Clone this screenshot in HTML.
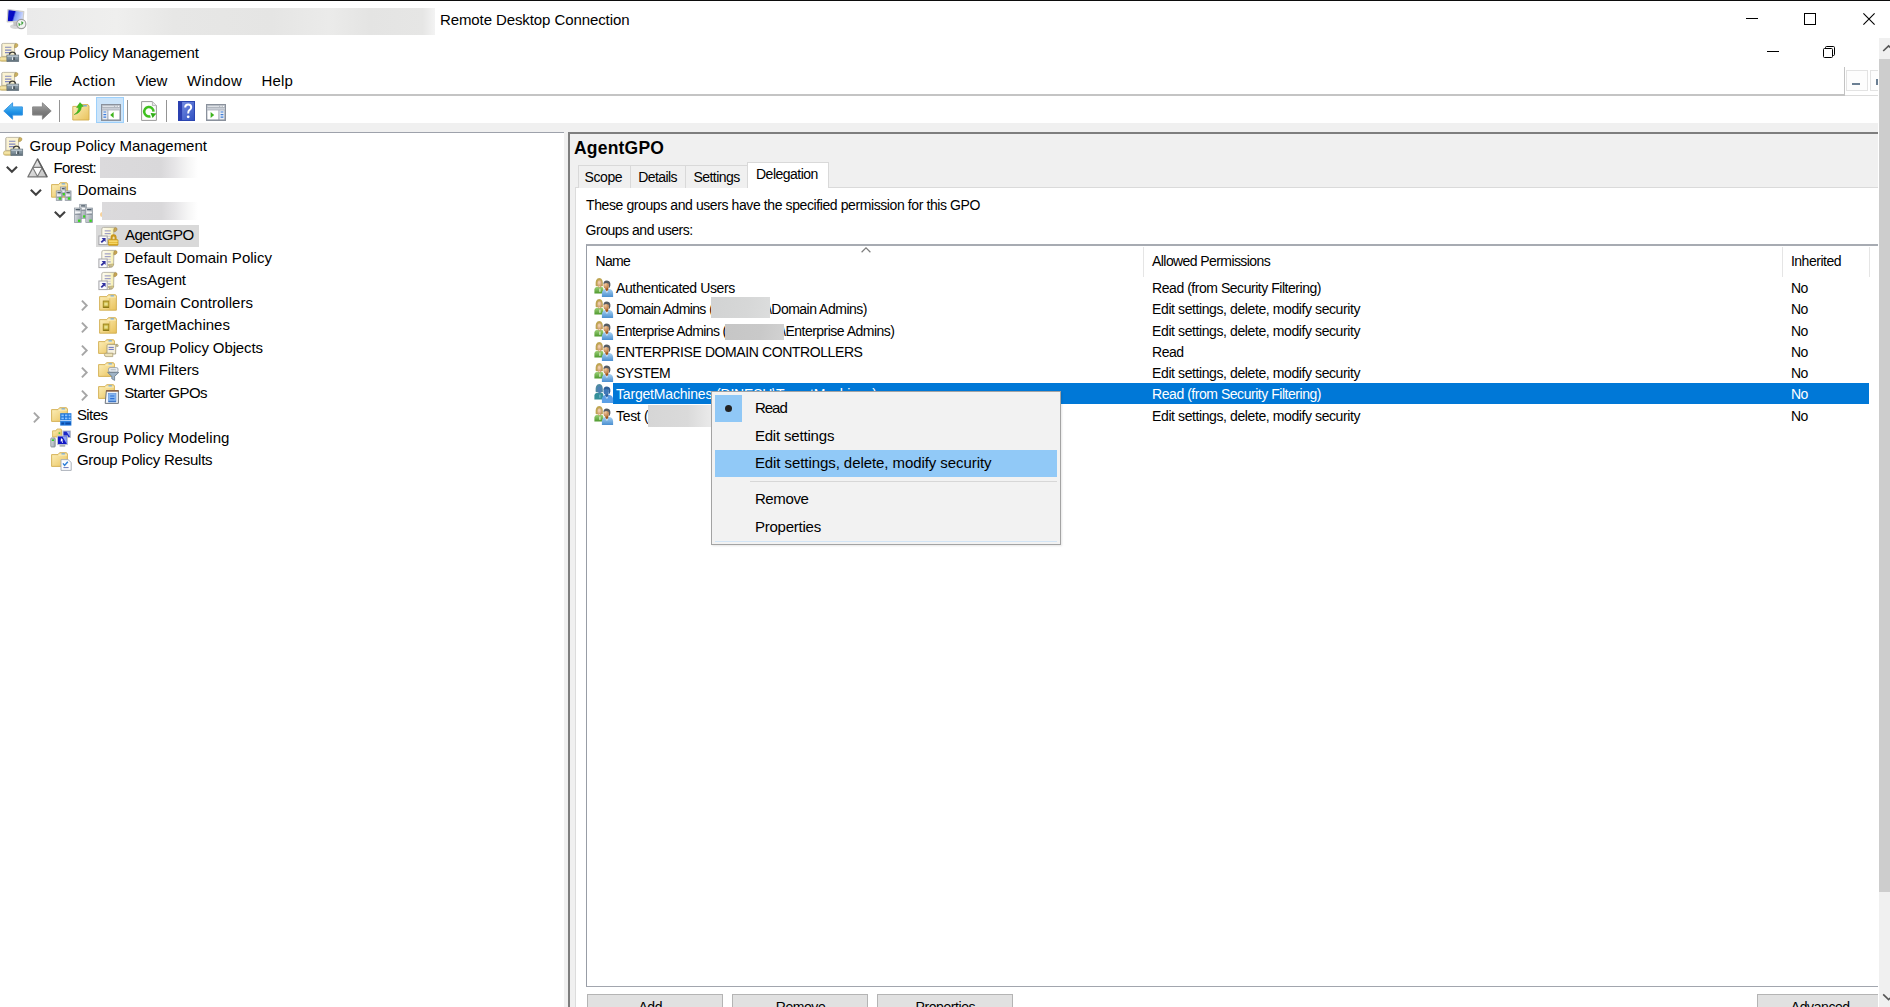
<!DOCTYPE html>
<html lang="en">
<head>
<meta charset="utf-8">
<title>Remote Desktop Connection - Group Policy Management</title>
<style>
*{box-sizing:border-box;margin:0;padding:0}
html,body{width:1890px;height:1007px;overflow:hidden;background:#fff}
body{position:relative;font-family:"Liberation Sans",sans-serif;color:#000;font-size:15px}
.abs{position:absolute}
.t{position:absolute;white-space:pre;line-height:1;color:#000}
svg{overflow:visible}
</style>
</head>
<body>
<svg class="abs" width="0" height="0" style="left:0;top:0"><defs>
<linearGradient id="gFold" x1="0" y1="0" x2="0" y2="1"><stop offset="0" stop-color="#fbe9a6"/><stop offset="1" stop-color="#eec962"/></linearGradient>
<linearGradient id="gFold2" x1="0" y1="0" x2="1" y2="1"><stop offset="0" stop-color="#fdf0bd"/><stop offset="1" stop-color="#e9c25a"/></linearGradient>
<linearGradient id="gBlue" x1="0" y1="0" x2="0" y2="1"><stop offset="0" stop-color="#6fc6f7"/><stop offset="0.55" stop-color="#1f93e6"/><stop offset="1" stop-color="#0b6fd0"/></linearGradient>
<linearGradient id="gGray" x1="0" y1="0" x2="0" y2="1"><stop offset="0" stop-color="#a9a9a9"/><stop offset="0.55" stop-color="#7d7d7d"/><stop offset="1" stop-color="#6a6a6a"/></linearGradient>
<linearGradient id="gSrv" x1="0" y1="0" x2="1" y2="0.4"><stop offset="0" stop-color="#e3e6ea"/><stop offset="1" stop-color="#a3abb4"/></linearGradient>
<linearGradient id="gHelp" x1="0" y1="0" x2="1" y2="1"><stop offset="0" stop-color="#7c93e6"/><stop offset="1" stop-color="#2f4fc0"/></linearGradient>
<linearGradient id="gTri" x1="0" y1="0" x2="1" y2="1"><stop offset="0" stop-color="#f0f0f0"/><stop offset="1" stop-color="#c2c2c2"/></linearGradient>
<linearGradient id="gScr" x1="0" y1="0" x2="1" y2="0.22"><stop offset="0" stop-color="#2a3ad6"/><stop offset="0.12" stop-color="#0a10c6"/><stop offset="0.46" stop-color="#0508c2"/><stop offset="0.56" stop-color="#7d98f1"/><stop offset="1" stop-color="#cdd9fd"/></linearGradient>
<linearGradient id="gPaper" x1="0" y1="0" x2="1" y2="0"><stop offset="0" stop-color="#fdfbf0"/><stop offset="0.55" stop-color="#fbf7d8"/><stop offset="1" stop-color="#f3ea9a"/></linearGradient>
<linearGradient id="gLock" x1="0" y1="0" x2="0" y2="1"><stop offset="0" stop-color="#f7d56a"/><stop offset="1" stop-color="#d9a514"/></linearGradient>
<linearGradient id="gWin" x1="0" y1="0" x2="0" y2="1"><stop offset="0" stop-color="#b9bec6"/><stop offset="1" stop-color="#8f97a3"/></linearGradient>
<radialGradient id="gFace" cx="0.4" cy="0.35" r="0.7"><stop offset="0" stop-color="#f6d9b8"/><stop offset="1" stop-color="#c48f62"/></radialGradient>
<radialGradient id="gFace2" cx="0.35" cy="0.35" r="0.8"><stop offset="0" stop-color="#f0c9a0"/><stop offset="1" stop-color="#b06a30"/></radialGradient>
<linearGradient id="gShG" x1="0" y1="0" x2="0" y2="1"><stop offset="0" stop-color="#9fd27a"/><stop offset="1" stop-color="#4f9a2f"/></linearGradient>
<linearGradient id="gShB" x1="0" y1="0" x2="0" y2="1"><stop offset="0" stop-color="#a9d2f3"/><stop offset="1" stop-color="#4a8fd0"/></linearGradient>
</defs></svg>
<div class="abs" style="left:0px;top:0px;width:1890px;height:1px;background:#0c0c0c;"></div>
<svg class="abs" style="left:0px;top:0px" width="30" height="32" viewBox="0 0 30 32"><ellipse cx="15.6" cy="26.4" rx="5.6" ry="2.5" fill="#d6d6d6"/><path d="M13 21 L17.6 21 L17.2 26 L13.6 26 Z" fill="#c2c2c2"/><path d="M8 9.5 L23.8 11.6 L22.9 21.2 L7.2 21.8 Z" fill="url(#gScr)" stroke="#cdcdcb" stroke-width="1.2" stroke-linejoin="round"/><circle cx="21.3" cy="24" r="4.6" fill="#f3f3f3" stroke="#9c9c9c" stroke-width="1.1"/><path d="M18.4 22.6 L20.8 24.6 L18.8 26.6 Z M21.4 21 L23.6 22.8 L21.4 25.4 Z" fill="#3ea23c"/></svg>
<div class="abs" style="left:27px;top:8px;width:408px;height:26.8px;background:linear-gradient(90deg,#eaeaea 0%,#efefee 22%,#e7e7e6 36%,#e5e5e4 60%,#ebebea 74%,#e4e4e3 84%,#e6e6e5 97%,#f3f3f3 100%);"></div>
<div class="t" style="left:439.9px;top:12.1px;font-size:15px;letter-spacing:-0.089px;">Remote Desktop Connection</div>
<svg class="abs" style="left:1746px;top:18px" width="12" height="1" viewBox="0 0 12 1"><rect x="0" y="0" width="12" height="1" fill="#000"/></svg>
<svg class="abs" style="left:1804px;top:13px" width="12" height="12" viewBox="0 0 12 12"><rect x="0.5" y="0.5" width="11" height="11" fill="none" stroke="#000" stroke-width="1"/></svg>
<svg class="abs" style="left:1863px;top:13px" width="12" height="12" viewBox="0 0 12 12"><path d="M0.4 0.4 L11.6 11.6 M11.6 0.4 L0.4 11.6" stroke="#000" stroke-width="1.1"/></svg>
<svg class="abs" style="left:-1px;top:43.1px" width="20" height="19" viewBox="0 0 20 19">
<path d="M2.6 1.6 Q2.6 0.4 4.4 0.4 L17 0.4 Q15.6 0.8 15.6 2.6 L15.6 13.4 L2.6 13.4 Z" fill="#fbf3d2" stroke="#b9b3a0" stroke-width="0.9"/>
<path d="M2.9 1.2 L2.9 13.4" stroke="#c9c6bd" stroke-width="1.2"/>
<path d="M15.6 2.8 Q15.6 0.5 17.6 0.5 Q19.4 0.9 18.8 3 Q18.2 4.6 15.6 4.8 Z" fill="#cdb260" stroke="#a8904a" stroke-width="0.6"/>
<path d="M6 4.3 H12.4 M6 7.1 H12.4 M6 9.6 H12.4" stroke="#8086bf" stroke-width="1.1"/>
<path d="M0.5 16 Q0.5 13.9 2.6 13.9 L9 13.9 L9 18.3 L2.4 18.3 Q0.5 18.3 0.5 16 Z" fill="#f4e4a4" stroke="#b9a566" stroke-width="0.7"/>
<path d="M0.8 17.4 H8.6" stroke="#d8c277" stroke-width="1"/>
<path d="M10.4 11.8 Q10.6 9.2 13.4 9.2 Q16.2 9.2 16.6 11.8" fill="none" stroke="#3f3f38" stroke-width="1.3"/>
<rect x="7.9" y="12.1" width="11.8" height="6.4" fill="#7f909b" stroke="#5d6b75" stroke-width="0.7"/>
<rect x="8.3" y="12.4" width="11" height="1.7" fill="#b3c0c9"/>
<rect x="8.3" y="16.6" width="11" height="1.5" fill="#667680"/>
<rect x="13.1" y="14.3" width="1.3" height="2.7" fill="#eef2f5"/><rect x="14.4" y="14.3" width="1.2" height="2.7" fill="#2e353b"/>
</svg>
<div class="t" style="left:23.8px;top:44.9px;font-size:15px;letter-spacing:-0.115px;">Group Policy Management</div>
<svg class="abs" style="left:1767px;top:51px" width="12" height="1" viewBox="0 0 12 1"><rect x="0" y="0" width="12" height="1" fill="#000"/></svg>
<svg class="abs" style="left:1823px;top:46px" width="12" height="12" viewBox="0 0 12 12"><path d="M2.5 2.5 L2.5 1.6 Q2.5 0.5 3.6 0.5 L10.4 0.5 Q11.5 0.5 11.5 1.6 L11.5 8.4 Q11.5 9.5 10.4 9.5 L9.5 9.5" fill="none" stroke="#000" stroke-width="1"/><rect x="0.5" y="2.5" width="9" height="9" rx="1" fill="none" stroke="#000" stroke-width="1"/></svg>
<svg class="abs" style="left:-1px;top:72.3px" width="20" height="19" viewBox="0 0 20 19">
<path d="M2.6 1.6 Q2.6 0.4 4.4 0.4 L17 0.4 Q15.6 0.8 15.6 2.6 L15.6 13.4 L2.6 13.4 Z" fill="#fbf3d2" stroke="#b9b3a0" stroke-width="0.9"/>
<path d="M2.9 1.2 L2.9 13.4" stroke="#c9c6bd" stroke-width="1.2"/>
<path d="M15.6 2.8 Q15.6 0.5 17.6 0.5 Q19.4 0.9 18.8 3 Q18.2 4.6 15.6 4.8 Z" fill="#cdb260" stroke="#a8904a" stroke-width="0.6"/>
<path d="M6 4.3 H12.4 M6 7.1 H12.4 M6 9.6 H12.4" stroke="#8086bf" stroke-width="1.1"/>
<path d="M0.5 16 Q0.5 13.9 2.6 13.9 L9 13.9 L9 18.3 L2.4 18.3 Q0.5 18.3 0.5 16 Z" fill="#f4e4a4" stroke="#b9a566" stroke-width="0.7"/>
<path d="M0.8 17.4 H8.6" stroke="#d8c277" stroke-width="1"/>
<path d="M10.4 11.8 Q10.6 9.2 13.4 9.2 Q16.2 9.2 16.6 11.8" fill="none" stroke="#3f3f38" stroke-width="1.3"/>
<rect x="7.9" y="12.1" width="11.8" height="6.4" fill="#7f909b" stroke="#5d6b75" stroke-width="0.7"/>
<rect x="8.3" y="12.4" width="11" height="1.7" fill="#b3c0c9"/>
<rect x="8.3" y="16.6" width="11" height="1.5" fill="#667680"/>
<rect x="13.1" y="14.3" width="1.3" height="2.7" fill="#eef2f5"/><rect x="14.4" y="14.3" width="1.2" height="2.7" fill="#2e353b"/>
</svg>
<div class="t" style="left:29.1px;top:72.6px;font-size:15px;letter-spacing:-0.330px;">File</div>
<div class="t" style="left:72.1px;top:72.6px;font-size:15px;letter-spacing:0.310px;">Action</div>
<div class="t" style="left:135.6px;top:72.6px;font-size:15px;letter-spacing:-0.198px;">View</div>
<div class="t" style="left:187.0px;top:72.6px;font-size:15px;letter-spacing:0.283px;">Window</div>
<div class="t" style="left:261.6px;top:72.6px;font-size:15px;letter-spacing:0.125px;">Help</div>
<div class="abs" style="left:0px;top:94.2px;width:1844px;height:1.9px;background:#c4c4c4;"></div>
<div class="abs" style="left:1843.5px;top:67px;width:1.5px;height:29px;background:#c3c3c3;"></div>
<div class="abs" style="left:1846px;top:70px;width:22px;height:21px;background:#fdfdfd;border:1px solid #e3e3e3;"></div>
<div class="abs" style="left:1852px;top:83.4px;width:8px;height:2px;background:#6b7f93;"></div>
<div class="abs" style="left:1870px;top:70px;width:9px;height:21px;background:#fdfdfd;border:1px solid #e3e3e3;border-right:none;"></div>
<div class="abs" style="left:1876px;top:79px;width:3px;height:6px;background:#6b7f93;"></div>
<div class="abs" style="left:1845px;top:94.5px;width:34px;height:1.5px;background:#dcdcdc;"></div>
<svg class="abs" style="left:3.2px;top:102.3px" width="20" height="18" viewBox="0 0 20 18"><path d="M0.8 9 L9.6 0.8 L9.6 4.9 L19.4 4.9 L19.4 13.1 L9.6 13.1 L9.6 17.2 Z" fill="url(#gBlue)" stroke="#3a97e4" stroke-width="1" stroke-linejoin="round"/></svg>
<svg class="abs" style="left:32px;top:102.3px" width="20" height="18" viewBox="0 0 20 18"><path d="M19.2 9 L10.4 0.8 L10.4 4.9 L0.6 4.9 L0.6 13.1 L10.4 13.1 L10.4 17.2 Z" fill="url(#gGray)" stroke="#8a8a8a" stroke-width="1" stroke-linejoin="round"/></svg>
<div class="abs" style="left:59.3px;top:99.5px;width:1.2px;height:22.3px;background:#949494;"></div>
<svg class="abs" style="left:71.8px;top:101.8px" width="18" height="19" viewBox="0 0 18 19"><path d="M0.8 18 L0.8 4.4 L5.6 4.4 L7 2.6 L16 2.6 L17 4 L17 18 Z" fill="url(#gFold2)" stroke="#d1ad4e" stroke-width="0.9"/><rect x="11.4" y="3.2" width="3.4" height="1.2" fill="#5aa0e8"/><path d="M2.2 12.6 Q6.2 10.6 6.8 5.8 L4.6 5.6 L8 0.6 L11.4 4.2 L9.4 4.8 Q9 11 2.2 12.6 Z" fill="#3fc01e" stroke="#2f9a14" stroke-width="0.5"/></svg>
<div class="abs" style="left:96px;top:97px;width:28.2px;height:26.4px;background:#cce4f9;border:1px solid #9dd0fb;"></div>
<svg class="abs" style="left:100.8px;top:103.9px" width="20" height="17" viewBox="0 0 20 17"><rect x="0.5" y="0.5" width="19" height="16" fill="url(#gWin)" stroke="#8a919c" stroke-width="1"/><path d="M1.6 2.4 H13" stroke="#e3e6ea" stroke-width="1"/><path d="M14.4 2.4 H15.6 M16.8 2.4 H18.2" stroke="#f4f5f7" stroke-width="1.2"/><rect x="1" y="4" width="18" height="1.6" fill="#c9ced6"/><rect x="1.4" y="6.4" width="5" height="9" fill="#e8ecf2"/><rect x="7.4" y="6.4" width="11" height="9" fill="#fff"/><path d="M2.4 8 H5.2 M2.4 10.6 H5.2 M2.4 13.2 H5.2" stroke="#3d7edb" stroke-width="1.2"/><path d="M12.6 8 L12.6 14 L9.2 11 Z" fill="#3fb41e"/></svg>
<div class="abs" style="left:126.9px;top:99.5px;width:1.2px;height:22.3px;background:#949494;"></div>
<svg class="abs" style="left:141px;top:100.8px" width="16" height="20" viewBox="0 0 16 20"><path d="M0.6 0.6 L11.4 0.6 L15.4 4.6 L15.4 19.4 L0.6 19.4 Z" fill="#fdfdfd" stroke="#9a9a9a" stroke-width="1"/><path d="M11.4 0.6 L11.4 4.6 L15.4 4.6" fill="#e6e6e6" stroke="#aaa" stroke-width="0.8"/><path d="M12.6 10.6 A4.7 4.7 0 1 0 9.4 15.2" fill="none" stroke="#3fc01e" stroke-width="2.5"/><path d="M9.6 12 L15.4 12.6 L11.6 17 Z" fill="#2fae14"/></svg>
<div class="abs" style="left:165.7px;top:99.5px;width:1.2px;height:22.3px;background:#949494;"></div>
<svg class="abs" style="left:178px;top:100.7px" width="17" height="20" viewBox="0 0 17 20"><rect x="0.5" y="0.5" width="16" height="19" fill="url(#gHelp)" stroke="#2b45b0" stroke-width="1"/><rect x="0.5" y="0.5" width="3.6" height="19" fill="#2b3fb0"/><path d="M7.2 6.4 Q7.2 3.4 10.2 3.4 Q13.2 3.4 13.2 6.2 Q13.2 8 11.4 9.2 Q10.2 10 10.2 12.4" fill="none" stroke="#fff" stroke-width="2"/><circle cx="10.2" cy="15.8" r="1.4" fill="#fff"/></svg>
<svg class="abs" style="left:206px;top:103.9px" width="20" height="17" viewBox="0 0 20 17"><rect x="0.5" y="0.5" width="19" height="16" fill="url(#gWin)" stroke="#8a919c" stroke-width="1"/><path d="M1.6 2.4 H13" stroke="#e3e6ea" stroke-width="1"/><path d="M14.4 2.4 H15.6 M16.8 2.4 H18.2" stroke="#f4f5f7" stroke-width="1.2"/><rect x="1" y="4" width="18" height="1.6" fill="#c9ced6"/><rect x="1.4" y="6.4" width="11" height="9" fill="#fff"/><rect x="13.4" y="6.4" width="5" height="9" fill="#e8ecf2"/><path d="M14.6 8 H17.4 M14.6 10.6 H17.4 M14.6 13.2 H17.4" stroke="#3d7edb" stroke-width="1.2"/><path d="M4.6 8 L4.6 14 L8.2 11 Z" fill="#3fb41e"/></svg>
<div class="abs" style="left:0px;top:123.4px;width:1879px;height:8.8px;background:#f0f0f0;"></div>
<div class="abs" style="left:0px;top:132px;width:564.5px;height:875px;background:#fff;border-top:1.2px solid #9ea2ab;border-right:1.5px solid #a3a7b0;"></div>
<svg class="abs" style="left:3.3px;top:136.9px" width="20" height="19" viewBox="0 0 20 19">
<path d="M2.6 1.6 Q2.6 0.4 4.4 0.4 L17 0.4 Q15.6 0.8 15.6 2.6 L15.6 13.4 L2.6 13.4 Z" fill="#fbf3d2" stroke="#b9b3a0" stroke-width="0.9"/>
<path d="M2.9 1.2 L2.9 13.4" stroke="#c9c6bd" stroke-width="1.2"/>
<path d="M15.6 2.8 Q15.6 0.5 17.6 0.5 Q19.4 0.9 18.8 3 Q18.2 4.6 15.6 4.8 Z" fill="#cdb260" stroke="#a8904a" stroke-width="0.6"/>
<path d="M6 4.3 H12.4 M6 7.1 H12.4 M6 9.6 H12.4" stroke="#8086bf" stroke-width="1.1"/>
<path d="M0.5 16 Q0.5 13.9 2.6 13.9 L9 13.9 L9 18.3 L2.4 18.3 Q0.5 18.3 0.5 16 Z" fill="#f4e4a4" stroke="#b9a566" stroke-width="0.7"/>
<path d="M0.8 17.4 H8.6" stroke="#d8c277" stroke-width="1"/>
<path d="M10.4 11.8 Q10.6 9.2 13.4 9.2 Q16.2 9.2 16.6 11.8" fill="none" stroke="#3f3f38" stroke-width="1.3"/>
<rect x="7.9" y="12.1" width="11.8" height="6.4" fill="#7f909b" stroke="#5d6b75" stroke-width="0.7"/>
<rect x="8.3" y="12.4" width="11" height="1.7" fill="#b3c0c9"/>
<rect x="8.3" y="16.6" width="11" height="1.5" fill="#667680"/>
<rect x="13.1" y="14.3" width="1.3" height="2.7" fill="#eef2f5"/><rect x="14.4" y="14.3" width="1.2" height="2.7" fill="#2e353b"/>
</svg>
<div class="t" style="left:29.6px;top:137.5px;font-size:15px;letter-spacing:-0.011px;">Group Policy Management</div>
<svg class="abs" style="left:6.4px;top:166px" width="12" height="7" viewBox="0 0 12 7"><path d="M0.8 0.8 L5.9 5.8 L11 0.8" fill="none" stroke="#404040" stroke-width="2.1"/></svg>
<svg class="abs" style="left:26.6px;top:158px" width="21" height="20" viewBox="0 0 21 20">
<path d="M10.5 0.9 L20.1 18.9 L0.9 18.9 Z" fill="url(#gTri)" stroke="#767676" stroke-width="1.2" stroke-linejoin="round"/>
<path d="M5.7 9.4 L15.3 9.4 L10.5 18.6 Z" fill="#ffffff" stroke="#7c7c7c" stroke-width="1.1" stroke-linejoin="round"/>
<path d="M10.5 0.9 L20.1 18.9" stroke="#5e5e5e" stroke-width="1.3"/>
</svg>
<div class="t" style="left:53.4px;top:160.0px;font-size:15px;letter-spacing:-0.547px;">Forest:</div>
<div class="abs" style="left:100.1px;top:157.2px;width:98px;height:20.6px;background:linear-gradient(90deg,#dbdadc 0%,#d9d8da 62%,#e6e5e7 76%,#f6f6f6 90%,#ffffff 100%);"></div>
<svg class="abs" style="left:30.2px;top:188.6px" width="12" height="7" viewBox="0 0 12 7"><path d="M0.8 0.8 L5.9 5.8 L11 0.8" fill="none" stroke="#404040" stroke-width="2.1"/></svg>
<svg class="abs" style="left:50.8px;top:182px" width="21" height="19" viewBox="0 0 21 19"><path d="M0.6 15.200000000000001 L0.6 2.6 L7.6 2.6 L9.2 0.7 L15.7 0.7 L16.599999999999998 2 L16.599999999999998 15.200000000000001 Z" fill="url(#gFold2)" stroke="#d1ad4e" stroke-width="0.9"/><rect x="10.7" y="1.4" width="3.4" height="1.3" fill="#5aa0e8"/><path d="M8.2 3 L16.2 3" stroke="#fff6cf" stroke-width="0.8"/><rect x="9.60" y="5" width="5.2" height="9" fill="url(#gSrv)" stroke="#8b949d" stroke-width="0.7"/><rect x="10.70" y="6" width="3.00" height="1.3" rx="0.6" fill="#4f5d69"/><rect x="10.40" y="8.6" width="3.60" height="1.3" fill="#f7f8f9"/><rect x="10.20" y="11" width="4.00" height="0.7" fill="#7c868f"/><rect x="11.60" y="11" width="2.4" height="2.3" fill="#35d61c"/><rect x="5.25" y="8.9" width="5.7" height="9.5" fill="url(#gSrv)" stroke="#8b949d" stroke-width="0.7"/><rect x="6.35" y="9.9" width="3.50" height="1.3" rx="0.6" fill="#4f5d69"/><rect x="6.05" y="12.5" width="4.10" height="1.3" fill="#f7f8f9"/><rect x="5.85" y="14.9" width="4.50" height="0.7" fill="#7c868f"/><rect x="7.75" y="15.399999999999999" width="2.4" height="2.3" fill="#35d61c"/><rect x="14.15" y="8.9" width="5.9" height="9.5" fill="url(#gSrv)" stroke="#8b949d" stroke-width="0.7"/><rect x="15.25" y="9.9" width="3.70" height="1.3" rx="0.6" fill="#4f5d69"/><rect x="14.95" y="12.5" width="4.30" height="1.3" fill="#f7f8f9"/><rect x="14.75" y="14.9" width="4.70" height="0.7" fill="#7c868f"/><rect x="16.85" y="15.399999999999999" width="2.4" height="2.3" fill="#35d61c"/></svg>
<div class="t" style="left:77.6px;top:182.4px;font-size:15px;letter-spacing:-0.063px;">Domains</div>
<svg class="abs" style="left:54.4px;top:211px" width="12" height="7" viewBox="0 0 12 7"><path d="M0.8 0.8 L5.9 5.8 L11 0.8" fill="none" stroke="#404040" stroke-width="2.1"/></svg>
<svg class="abs" style="left:74.4px;top:204.2px" width="20" height="19" viewBox="0 0 20 19"><rect x="5.70" y="0.3" width="6.6" height="14" fill="url(#gSrv)" stroke="#8b949d" stroke-width="0.7"/><rect x="6.80" y="1.3" width="4.40" height="1.3" rx="0.6" fill="#4f5d69"/><rect x="6.50" y="3.9" width="5.00" height="1.3" fill="#f7f8f9"/><rect x="6.30" y="6.3" width="5.40" height="0.7" fill="#7c868f"/><rect x="9.10" y="11.3" width="2.4" height="2.3" fill="#35d61c"/><rect x="0.40" y="4" width="6.8" height="14.6" fill="url(#gSrv)" stroke="#8b949d" stroke-width="0.7"/><rect x="1.50" y="5" width="4.60" height="1.3" rx="0.6" fill="#4f5d69"/><rect x="1.20" y="7.6" width="5.20" height="1.3" fill="#f7f8f9"/><rect x="1.00" y="10" width="5.60" height="0.7" fill="#7c868f"/><rect x="4.00" y="15.600000000000001" width="2.4" height="2.3" fill="#35d61c"/><rect x="11.80" y="4" width="6.8" height="14.6" fill="url(#gSrv)" stroke="#8b949d" stroke-width="0.7"/><rect x="12.90" y="5" width="4.60" height="1.3" rx="0.6" fill="#4f5d69"/><rect x="12.60" y="7.6" width="5.20" height="1.3" fill="#f7f8f9"/><rect x="12.40" y="10" width="5.60" height="0.7" fill="#7c868f"/><rect x="15.40" y="15.600000000000001" width="2.4" height="2.3" fill="#35d61c"/></svg>
<div class="abs" style="left:100.4px;top:211.8px;width:2.4px;height:5.4px;background:#f6d29c;border-radius:3px 0 0 3px;"></div>
<div class="abs" style="left:102.1px;top:202px;width:96px;height:17.9px;background:linear-gradient(90deg,#dbdadc 0%,#d9d8da 62%,#e6e5e7 76%,#f6f6f6 90%,#ffffff 100%);"></div>
<div class="abs" style="left:96px;top:224.8px;width:103.3px;height:22px;background:#d9d9d9;"></div>
<svg class="abs" style="left:97.8px;top:227.38px" width="21" height="19" viewBox="0 0 21 19"><path d="M3.8 2 Q3.8 0.4 5.6 0.4 L17.4 0.4 Q15.9 0.8 15.9 2.8 L15.6 14.6 Q15.2 17.5 12.4 17.5 L3.8 17.5 Z" fill="url(#gPaper)" stroke="#b4b0a2" stroke-width="0.9"/><path d="M15.9 3 Q15.9 0.6 17.8 0.6 Q19.6 1 19 3 Q18.4 4.6 15.9 4.8 Z" fill="#c9a652" stroke="#a88c46" stroke-width="0.6"/><path d="M6.7 3.9 H12.7 M6.7 6.7 H12.7 M10 11.9 H12.7" stroke="#8c8cc0" stroke-width="1"/><path d="M6.7 9.3 H12.7" stroke="#c9c6da" stroke-width="0.9"/><path d="M10 14.6 Q10.6 17.8 14 16.6 Q15.4 15.8 15.6 14 Z" fill="#e3d88c" stroke="#a99866" stroke-width="0.6"/><path d="M11.6 15 V17 M13 14.8 V16.8" stroke="#8a84a8" stroke-width="0.6"/><rect x="0.9" y="9" width="8.3" height="8.6" fill="#fbfbfd" stroke="#a4a4a8" stroke-width="1"/><path d="M3.6 11 L7.6 11 L7.6 15 L6.3 13.7 L3.9 16.1 L2.6 14.8 L5 12.4 Z" fill="#3232a0"/><path d="M12.6 13 L12.6 10.6 Q12.6 7.2 15.6 7.2 Q18.6 7.2 18.6 10.6 L18.6 13 Z" fill="#c8961c"/><path d="M14.6 13 L14.6 10.8 Q14.6 9.4 15.6 9.4 Q16.6 9.4 16.6 10.8 L16.6 13 Z" fill="#ecdca8"/><rect x="10.4" y="12.6" width="9.6" height="5.7" rx="0.6" fill="url(#gLock)" stroke="#b98c12" stroke-width="0.7"/><path d="M10.8 14.5 H19.6 M10.8 16.5 H19.6" stroke="#f9de74" stroke-width="0.8"/></svg>
<div class="t" style="left:124.9px;top:227.4px;font-size:15px;letter-spacing:-0.461px;">AgentGPO</div>
<svg class="abs" style="left:97.8px;top:249.84999999999997px" width="21" height="19" viewBox="0 0 21 19"><path d="M3.8 2 Q3.8 0.4 5.6 0.4 L17.4 0.4 Q15.9 0.8 15.9 2.8 L15.6 14.6 Q15.2 17.5 12.4 17.5 L3.8 17.5 Z" fill="url(#gPaper)" stroke="#b4b0a2" stroke-width="0.9"/><path d="M15.9 3 Q15.9 0.6 17.8 0.6 Q19.6 1 19 3 Q18.4 4.6 15.9 4.8 Z" fill="#c9a652" stroke="#a88c46" stroke-width="0.6"/><path d="M6.7 3.9 H12.7 M6.7 6.7 H12.7 M10 11.9 H12.7" stroke="#8c8cc0" stroke-width="1"/><path d="M6.7 9.3 H12.7" stroke="#c9c6da" stroke-width="0.9"/><path d="M10 14.6 Q10.6 17.8 14 16.6 Q15.4 15.8 15.6 14 Z" fill="#e3d88c" stroke="#a99866" stroke-width="0.6"/><path d="M11.6 15 V17 M13 14.8 V16.8" stroke="#8a84a8" stroke-width="0.6"/><rect x="0.9" y="9" width="8.3" height="8.6" fill="#fbfbfd" stroke="#a4a4a8" stroke-width="1"/><path d="M3.6 11 L7.6 11 L7.6 15 L6.3 13.7 L3.9 16.1 L2.6 14.8 L5 12.4 Z" fill="#3232a0"/></svg>
<div class="t" style="left:124.2px;top:249.9px;font-size:15px;letter-spacing:0.009px;">Default Domain Policy</div>
<svg class="abs" style="left:97.8px;top:272.32px" width="21" height="19" viewBox="0 0 21 19"><path d="M3.8 2 Q3.8 0.4 5.6 0.4 L17.4 0.4 Q15.9 0.8 15.9 2.8 L15.6 14.6 Q15.2 17.5 12.4 17.5 L3.8 17.5 Z" fill="url(#gPaper)" stroke="#b4b0a2" stroke-width="0.9"/><path d="M15.9 3 Q15.9 0.6 17.8 0.6 Q19.6 1 19 3 Q18.4 4.6 15.9 4.8 Z" fill="#c9a652" stroke="#a88c46" stroke-width="0.6"/><path d="M6.7 3.9 H12.7 M6.7 6.7 H12.7 M10 11.9 H12.7" stroke="#8c8cc0" stroke-width="1"/><path d="M6.7 9.3 H12.7" stroke="#c9c6da" stroke-width="0.9"/><path d="M10 14.6 Q10.6 17.8 14 16.6 Q15.4 15.8 15.6 14 Z" fill="#e3d88c" stroke="#a99866" stroke-width="0.6"/><path d="M11.6 15 V17 M13 14.8 V16.8" stroke="#8a84a8" stroke-width="0.6"/><rect x="0.9" y="9" width="8.3" height="8.6" fill="#fbfbfd" stroke="#a4a4a8" stroke-width="1"/><path d="M3.6 11 L7.6 11 L7.6 15 L6.3 13.7 L3.9 16.1 L2.6 14.8 L5 12.4 Z" fill="#3232a0"/></svg>
<div class="t" style="left:124.2px;top:272.3px;font-size:15px;letter-spacing:-0.099px;">TesAgent</div>
<svg class="abs" style="left:80.7px;top:299.89px" width="7" height="11" viewBox="0 0 7 11"><path d="M0.9 0.7 L5.7 5.5 L0.9 10.3" fill="none" stroke="#a6a6a6" stroke-width="1.9"/></svg>
<svg class="abs" style="left:99px;top:294.19px" width="18" height="17" viewBox="0 0 18 17"><path d="M0.6 16.2 L0.6 2.6 L7.8 2.6 L9.4 0.7 L16.5 0.7 L17.4 2 L17.4 16.2 Z" fill="url(#gFold2)" stroke="#d1ad4e" stroke-width="0.9"/><rect x="11.5" y="1.4" width="3.4" height="1.3" fill="#5aa0e8"/><path d="M8.4 3 L17 3" stroke="#fff6cf" stroke-width="0.8"/><rect x="4.2" y="7" width="5.8" height="6.4" fill="#c8b03c" stroke="#94801a" stroke-width="0.8"/><rect x="5.3" y="8.6" width="3.4" height="3" fill="#e6e08c"/><path d="M4.2 13.2 H10" stroke="#7e6c10" stroke-width="0.9"/><path d="M10.8 4.4 L10.8 15.6" stroke="#e2bf62" stroke-width="0.9"/></svg>
<div class="t" style="left:124.2px;top:294.8px;font-size:15px;letter-spacing:0.020px;">Domain Controllers</div>
<svg class="abs" style="left:80.7px;top:322.35999999999996px" width="7" height="11" viewBox="0 0 7 11"><path d="M0.9 0.7 L5.7 5.5 L0.9 10.3" fill="none" stroke="#a6a6a6" stroke-width="1.9"/></svg>
<svg class="abs" style="left:99px;top:316.65999999999997px" width="18" height="17" viewBox="0 0 18 17"><path d="M0.6 16.2 L0.6 2.6 L7.8 2.6 L9.4 0.7 L16.5 0.7 L17.4 2 L17.4 16.2 Z" fill="url(#gFold2)" stroke="#d1ad4e" stroke-width="0.9"/><rect x="11.5" y="1.4" width="3.4" height="1.3" fill="#5aa0e8"/><path d="M8.4 3 L17 3" stroke="#fff6cf" stroke-width="0.8"/><rect x="4.2" y="7" width="5.8" height="6.4" fill="#c8b03c" stroke="#94801a" stroke-width="0.8"/><rect x="5.3" y="8.6" width="3.4" height="3" fill="#e6e08c"/><path d="M4.2 13.2 H10" stroke="#7e6c10" stroke-width="0.9"/><path d="M10.8 4.4 L10.8 15.6" stroke="#e2bf62" stroke-width="0.9"/></svg>
<div class="t" style="left:124.2px;top:317.3px;font-size:15px;letter-spacing:-0.010px;">TargetMachines</div>
<svg class="abs" style="left:80.7px;top:344.8299999999999px" width="7" height="11" viewBox="0 0 7 11"><path d="M0.9 0.7 L5.7 5.5 L0.9 10.3" fill="none" stroke="#a6a6a6" stroke-width="1.9"/></svg>
<svg class="abs" style="left:97.6px;top:339.03px" width="21" height="19" viewBox="0 0 21 19"><path d="M0.6 14.4 L0.6 2.6 L7 2.6 L8.6 0.7 L15.5 0.7 L16.4 2 L16.4 14.4 Z" fill="url(#gFold2)" stroke="#d1ad4e" stroke-width="0.9"/><rect x="10.5" y="1.4" width="3.4" height="1.3" fill="#5aa0e8"/><path d="M7.6 3 L16 3" stroke="#fff6cf" stroke-width="0.8"/><path d="M9 6.6 Q9 5.4 10.4 5.4 L19.2 5.4 Q17.8 5.8 17.8 7.2 L17.6 15 L9 15 Z" fill="#f5f0dd" stroke="#9d9472" stroke-width="0.8"/><path d="M17.8 7.2 Q18 5.4 19.8 5.6 Q20.8 6.4 20 7.6 Z" fill="#d2c592" stroke="#9d9472" stroke-width="0.6"/><path d="M10.6 8.4 H15.8 M10.6 10.4 H15.8" stroke="#6a73c2" stroke-width="1"/><path d="M6.4 15.4 Q6.4 14.2 8 14.2 L14.8 14.2 L14.8 17.6 L8 17.6 Q6.4 17.6 6.4 15.4 Z" fill="#ece2b8" stroke="#a3946a" stroke-width="0.7"/></svg>
<div class="t" style="left:124.2px;top:339.7px;font-size:15px;letter-spacing:-0.107px;">Group Policy Objects</div>
<svg class="abs" style="left:80.7px;top:367.29999999999995px" width="7" height="11" viewBox="0 0 7 11"><path d="M0.9 0.7 L5.7 5.5 L0.9 10.3" fill="none" stroke="#a6a6a6" stroke-width="1.9"/></svg>
<svg class="abs" style="left:97.6px;top:361.5px" width="21" height="19" viewBox="0 0 21 19"><path d="M0.6 14.4 L0.6 2.6 L7 2.6 L8.6 0.7 L15.5 0.7 L16.4 2 L16.4 14.4 Z" fill="url(#gFold2)" stroke="#d1ad4e" stroke-width="0.9"/><rect x="10.5" y="1.4" width="3.4" height="1.3" fill="#5aa0e8"/><path d="M7.6 3 L16 3" stroke="#fff6cf" stroke-width="0.8"/><rect x="10.6" y="5.6" width="9.4" height="4.6" rx="1.4" fill="#e9edf1" stroke="#8f98a2" stroke-width="0.8"/><path d="M9.6 10.4 L20.8 10.4 L16.6 14.4 L16.6 18.4 L13.8 16.8 L13.8 14.4 Z" fill="#9fb3c6" stroke="#66788a" stroke-width="0.8"/><path d="M12.6 7.8 H17.8" stroke="#a7b0ba" stroke-width="0.9"/></svg>
<div class="t" style="left:124.2px;top:362.2px;font-size:15px;letter-spacing:-0.097px;">WMI Filters</div>
<svg class="abs" style="left:80.7px;top:389.77px" width="7" height="11" viewBox="0 0 7 11"><path d="M0.9 0.7 L5.7 5.5 L0.9 10.3" fill="none" stroke="#a6a6a6" stroke-width="1.9"/></svg>
<svg class="abs" style="left:97.6px;top:383.57px" width="21" height="20" viewBox="0 0 21 20"><path d="M0.6 14.4 L0.6 2.6 L7 2.6 L8.6 0.7 L15.5 0.7 L16.4 2 L16.4 14.4 Z" fill="url(#gFold2)" stroke="#d1ad4e" stroke-width="0.9"/><rect x="10.5" y="1.4" width="3.4" height="1.3" fill="#5aa0e8"/><path d="M7.6 3 L16 3" stroke="#fff6cf" stroke-width="0.8"/><path d="M8.4 6.6 L20.4 6.6 L20.4 19.4 L7.2 19.4 Z" fill="#f1f4f9" stroke="#62686f" stroke-width="0.9"/><path d="M8.2 6.9 L20.6 6.9" stroke="#8a5c3c" stroke-width="1.5"/><rect x="10.6" y="9.4" width="7.4" height="8.4" fill="#86b6f0" stroke="#5a8ed8" stroke-width="0.6"/><path d="M12.2 12 H16.4 M12.2 14.6 H16.4" stroke="#2f6fd4" stroke-width="1.1"/><rect x="10.6" y="16.8" width="7.4" height="1.4" fill="#3f76c6"/></svg>
<div class="t" style="left:124.2px;top:384.7px;font-size:15px;letter-spacing:-0.606px;">Starter GPOs</div>
<svg class="abs" style="left:33px;top:411.94px" width="7" height="11" viewBox="0 0 7 11"><path d="M0.9 0.7 L5.7 5.5 L0.9 10.3" fill="none" stroke="#a6a6a6" stroke-width="1.9"/></svg>
<svg class="abs" style="left:50.6px;top:406.73999999999995px" width="21" height="19" viewBox="0 0 21 19"><path d="M0.6 14.4 L0.6 2.6 L7 2.6 L8.6 0.7 L15.5 0.7 L16.4 2 L16.4 14.4 Z" fill="url(#gFold2)" stroke="#d1ad4e" stroke-width="0.9"/><rect x="10.5" y="1.4" width="3.4" height="1.3" fill="#5aa0e8"/><path d="M7.6 3 L16 3" stroke="#fff6cf" stroke-width="0.8"/><rect x="9.2" y="6.2" width="11.2" height="12.4" fill="#1f78dc"/><path d="M10.4 8.4 H12.8 M14 8.4 H16.4 M17.6 8.4 H19.6 M10.4 11.4 H12.8 M14 11.4 H16.4 M17.6 11.4 H19.6" stroke="#8cc4ff" stroke-width="1.6"/><path d="M9.2 13.6 H20.4" stroke="#cfe6ff" stroke-width="0.9"/><path d="M10.4 16.4 H13 M14.4 16.4 H19.6" stroke="#0d4aa6" stroke-width="2"/></svg>
<div class="t" style="left:76.9px;top:407.1px;font-size:15px;letter-spacing:-0.580px;">Sites</div>
<svg class="abs" style="left:50.4px;top:427.71px" width="21" height="20" viewBox="0 0 21 20"><path d="M2.6 9 L2.6 2.8 L6 2.8 L7 1 L11 1 L11.6 2.2 L11.6 9 Z" fill="url(#gFold2)" stroke="#d1ad4e" stroke-width="0.8"/><rect x="13" y="3" width="7.4" height="6.4" fill="#1c28c8" stroke="#b9bfc8" stroke-width="1"/><path d="M16.4 3.6 L19.8 3.6 L19.8 8.6 Z" fill="#9fb2f6"/><rect x="7.4" y="8" width="10" height="8.6" fill="#1016c4" stroke="#c2c8d0" stroke-width="1"/><path d="M12.4 8.6 L16.8 8.6 L16.8 16 Z" fill="#8ea4f4"/><path d="M11 10 L13.4 12.2 L12.2 12.6 L13 14.6 L12.2 15 L11.4 13 L10.6 13.8 Z" fill="#fff"/><rect x="9.6" y="17.2" width="5.6" height="1.4" fill="#9aa1a8"/><rect x="0.8" y="10" width="4.4" height="9" rx="0.8" fill="url(#gSrv)" stroke="#7c858c" stroke-width="0.8"/><rect x="1.8" y="11.4" width="2.2" height="1.6" fill="#2fd12a"/><rect x="8.6" y="4.4" width="1.6" height="1.4" fill="#3fc23a"/></svg>
<div class="t" style="left:76.9px;top:429.6px;font-size:15px;letter-spacing:0.083px;">Group Policy Modeling</div>
<svg class="abs" style="left:50.6px;top:451.67999999999995px" width="21" height="19" viewBox="0 0 21 19"><path d="M0.6 14.4 L0.6 2.6 L7 2.6 L8.6 0.7 L15.5 0.7 L16.4 2 L16.4 14.4 Z" fill="url(#gFold2)" stroke="#d1ad4e" stroke-width="0.9"/><rect x="10.5" y="1.4" width="3.4" height="1.3" fill="#5aa0e8"/><path d="M7.6 3 L16 3" stroke="#fff6cf" stroke-width="0.8"/><path d="M10 7.6 L17 7.6 L20.2 10.4 L20.2 18.4 L10 18.4 Z" fill="#fbfcfe" stroke="#a3a9b2" stroke-width="0.9"/><path d="M12 11.4 L13.6 13.4 L16.8 9.8" fill="none" stroke="#2f7fd8" stroke-width="1.5"/><path d="M12.4 15.6 H17.6" stroke="#6a78b8" stroke-width="1"/></svg>
<div class="t" style="left:76.9px;top:452.1px;font-size:15px;letter-spacing:-0.230px;">Group Policy Results</div>
<div class="abs" style="left:564px;top:132px;width:4.4px;height:875px;background:#f0f0f0;"></div>
<div class="abs" style="left:568.3px;top:132.2px;width:1311px;height:875px;background:#f0f0f0;border-top:2.2px solid #7e7e7e;border-left:2.6px solid #7e7e7e;"></div>
<div class="t" style="left:574.0px;top:139.6px;font-size:17.5px;letter-spacing:0.209px;font-weight:bold;">AgentGPO</div>
<div class="abs" style="left:575.3px;top:187.1px;width:1303px;height:820px;background:#fff;border-top:1px solid #dadada;border-left:1px solid #dcdcdc;"></div>
<div class="abs" style="left:577.6px;top:165.4px;width:53.60000000000002px;height:22.4px;background:#f0f0f0;border:1px solid #d9d9d9;border-bottom:none;"></div>
<div class="abs" style="left:630.2px;top:165.4px;width:56.19999999999993px;height:22.4px;background:#f0f0f0;border:1px solid #d9d9d9;border-bottom:none;"></div>
<div class="abs" style="left:685.4px;top:165.4px;width:62.39999999999998px;height:22.4px;background:#f0f0f0;border:1px solid #d9d9d9;border-bottom:none;"></div>
<div class="abs" style="left:746.8px;top:162.4px;width:82.2px;height:26px;background:#fff;border:1px solid #d9d9d9;border-bottom:none;"></div>
<div class="t" style="left:584.6px;top:169.8px;font-size:14px;letter-spacing:-0.410px;">Scope</div>
<div class="t" style="left:638.2px;top:169.8px;font-size:14px;letter-spacing:-0.578px;">Details</div>
<div class="t" style="left:693.4px;top:169.8px;font-size:14px;letter-spacing:-0.542px;">Settings</div>
<div class="t" style="left:756.0px;top:167.2px;font-size:14px;letter-spacing:-0.509px;">Delegation</div>
<div class="t" style="left:586.0px;top:198.3px;font-size:14px;letter-spacing:-0.404px;">These groups and users have the specified permission for this GPO</div>
<div class="t" style="left:585.6px;top:223.3px;font-size:14px;letter-spacing:-0.478px;">Groups and users:</div>
<div class="abs" style="left:585.5px;top:243.9px;width:1293px;height:743.1px;background:#fff;border-top:2.1px solid #a7abb2;border-left:1.7px solid #989da6;border-bottom:1.8px solid #a2a6ae;"></div>
<div class="t" style="left:595.6px;top:254.4px;font-size:14px;letter-spacing:-0.749px;">Name</div>
<div class="t" style="left:1152.1px;top:254.4px;font-size:14px;letter-spacing:-0.590px;">Allowed Permissions</div>
<div class="t" style="left:1790.9px;top:254.4px;font-size:14px;letter-spacing:-0.482px;">Inherited</div>
<div class="abs" style="left:1143.3px;top:247px;width:1px;height:30px;background:#e5e5e5;"></div>
<div class="abs" style="left:1782px;top:247px;width:1px;height:30px;background:#e5e5e5;"></div>
<div class="abs" style="left:1869px;top:247px;width:1px;height:30px;background:#e5e5e5;"></div>
<svg class="abs" style="left:861.1px;top:246.6px" width="10" height="6" viewBox="0 0 10 6"><path d="M0.6 5.2 L5 0.9 L9.4 5.2" fill="none" stroke="#7c7c7c" stroke-width="1.2"/></svg>
<div class="abs" style="left:613.2px;top:383.2px;width:1255.8px;height:21px;background:#0078d7;"></div>
<svg class="abs" style="left:590px;top:276.0px" width="30" height="24" viewBox="0 0 30 24">
<path d="M4.4 17.4 L4.4 13.6 Q4.6 10.9 8 10.7 L11.6 10.7 Q13.4 11 13.4 13 L13.4 17.4 Z" fill="url(#gShG)"/>
<rect x="9" y="12.6" width="1.7" height="3.2" fill="#d2e8c4" opacity="0.8"/>
<path d="M5.6 9.6 Q5 2 9.3 1.9 Q13.4 2 12.9 9.8 Q12 10.6 11.6 10.2 L7 10.2 Q6 10.4 5.6 9.6 Z" fill="#bfa552"/>
<ellipse cx="9.6" cy="7.5" rx="2.3" ry="3.3" fill="url(#gFace)"/>
<rect x="8.7" y="10" width="1.9" height="1.6" fill="url(#gFace)"/>
<path d="M11.9 21 L11.9 17 Q12.2 13.2 16 12.9 L19.6 12.9 Q23 13.4 23.1 17.6 L23.1 21 Z" fill="url(#gShB)"/>
<path d="M15.2 11 L18.4 11 L18.2 14.2 L16.8 15.4 L15.5 14 Z" fill="#a3541a"/>
<path d="M15.3 13.6 L16.8 15.6 L18.3 13.8 L17.6 16.6 L16 16.6 Z" fill="#e8f2fb" opacity="0.75"/>
<ellipse cx="16.2" cy="9.3" rx="2.7" ry="3.5" fill="url(#gFace2)"/>
<path d="M13.5 8.6 Q13.2 4.4 17 4.5 Q20.7 4.8 20.4 9.2 Q20.2 11.2 18.8 12.4 Q19.4 9.4 18.6 7.8 Q16.4 6.4 14.4 7.4 Q13.8 7.8 13.5 8.6 Z" fill="#555b61"/>
</svg>
<div class="t" style="left:1152.1px;top:281.0px;font-size:14px;letter-spacing:-0.463px;">Read (from Security Filtering)</div>
<div class="t" style="left:1791.0px;top:281.0px;font-size:14px;letter-spacing:-0.624px;">No</div>
<svg class="abs" style="left:590px;top:297.27px" width="30" height="24" viewBox="0 0 30 24">
<path d="M4.4 17.4 L4.4 13.6 Q4.6 10.9 8 10.7 L11.6 10.7 Q13.4 11 13.4 13 L13.4 17.4 Z" fill="url(#gShG)"/>
<rect x="9" y="12.6" width="1.7" height="3.2" fill="#d2e8c4" opacity="0.8"/>
<path d="M5.6 9.6 Q5 2 9.3 1.9 Q13.4 2 12.9 9.8 Q12 10.6 11.6 10.2 L7 10.2 Q6 10.4 5.6 9.6 Z" fill="#bfa552"/>
<ellipse cx="9.6" cy="7.5" rx="2.3" ry="3.3" fill="url(#gFace)"/>
<rect x="8.7" y="10" width="1.9" height="1.6" fill="url(#gFace)"/>
<path d="M11.9 21 L11.9 17 Q12.2 13.2 16 12.9 L19.6 12.9 Q23 13.4 23.1 17.6 L23.1 21 Z" fill="url(#gShB)"/>
<path d="M15.2 11 L18.4 11 L18.2 14.2 L16.8 15.4 L15.5 14 Z" fill="#a3541a"/>
<path d="M15.3 13.6 L16.8 15.6 L18.3 13.8 L17.6 16.6 L16 16.6 Z" fill="#e8f2fb" opacity="0.75"/>
<ellipse cx="16.2" cy="9.3" rx="2.7" ry="3.5" fill="url(#gFace2)"/>
<path d="M13.5 8.6 Q13.2 4.4 17 4.5 Q20.7 4.8 20.4 9.2 Q20.2 11.2 18.8 12.4 Q19.4 9.4 18.6 7.8 Q16.4 6.4 14.4 7.4 Q13.8 7.8 13.5 8.6 Z" fill="#555b61"/>
</svg>
<div class="t" style="left:1152.1px;top:302.3px;font-size:14px;letter-spacing:-0.405px;">Edit settings, delete, modify security</div>
<div class="t" style="left:1791.0px;top:302.3px;font-size:14px;letter-spacing:-0.624px;">No</div>
<svg class="abs" style="left:590px;top:318.54px" width="30" height="24" viewBox="0 0 30 24">
<path d="M4.4 17.4 L4.4 13.6 Q4.6 10.9 8 10.7 L11.6 10.7 Q13.4 11 13.4 13 L13.4 17.4 Z" fill="url(#gShG)"/>
<rect x="9" y="12.6" width="1.7" height="3.2" fill="#d2e8c4" opacity="0.8"/>
<path d="M5.6 9.6 Q5 2 9.3 1.9 Q13.4 2 12.9 9.8 Q12 10.6 11.6 10.2 L7 10.2 Q6 10.4 5.6 9.6 Z" fill="#bfa552"/>
<ellipse cx="9.6" cy="7.5" rx="2.3" ry="3.3" fill="url(#gFace)"/>
<rect x="8.7" y="10" width="1.9" height="1.6" fill="url(#gFace)"/>
<path d="M11.9 21 L11.9 17 Q12.2 13.2 16 12.9 L19.6 12.9 Q23 13.4 23.1 17.6 L23.1 21 Z" fill="url(#gShB)"/>
<path d="M15.2 11 L18.4 11 L18.2 14.2 L16.8 15.4 L15.5 14 Z" fill="#a3541a"/>
<path d="M15.3 13.6 L16.8 15.6 L18.3 13.8 L17.6 16.6 L16 16.6 Z" fill="#e8f2fb" opacity="0.75"/>
<ellipse cx="16.2" cy="9.3" rx="2.7" ry="3.5" fill="url(#gFace2)"/>
<path d="M13.5 8.6 Q13.2 4.4 17 4.5 Q20.7 4.8 20.4 9.2 Q20.2 11.2 18.8 12.4 Q19.4 9.4 18.6 7.8 Q16.4 6.4 14.4 7.4 Q13.8 7.8 13.5 8.6 Z" fill="#555b61"/>
</svg>
<div class="t" style="left:1152.1px;top:323.6px;font-size:14px;letter-spacing:-0.405px;">Edit settings, delete, modify security</div>
<div class="t" style="left:1791.0px;top:323.6px;font-size:14px;letter-spacing:-0.624px;">No</div>
<svg class="abs" style="left:590px;top:339.81px" width="30" height="24" viewBox="0 0 30 24">
<path d="M4.4 17.4 L4.4 13.6 Q4.6 10.9 8 10.7 L11.6 10.7 Q13.4 11 13.4 13 L13.4 17.4 Z" fill="url(#gShG)"/>
<rect x="9" y="12.6" width="1.7" height="3.2" fill="#d2e8c4" opacity="0.8"/>
<path d="M5.6 9.6 Q5 2 9.3 1.9 Q13.4 2 12.9 9.8 Q12 10.6 11.6 10.2 L7 10.2 Q6 10.4 5.6 9.6 Z" fill="#bfa552"/>
<ellipse cx="9.6" cy="7.5" rx="2.3" ry="3.3" fill="url(#gFace)"/>
<rect x="8.7" y="10" width="1.9" height="1.6" fill="url(#gFace)"/>
<path d="M11.9 21 L11.9 17 Q12.2 13.2 16 12.9 L19.6 12.9 Q23 13.4 23.1 17.6 L23.1 21 Z" fill="url(#gShB)"/>
<path d="M15.2 11 L18.4 11 L18.2 14.2 L16.8 15.4 L15.5 14 Z" fill="#a3541a"/>
<path d="M15.3 13.6 L16.8 15.6 L18.3 13.8 L17.6 16.6 L16 16.6 Z" fill="#e8f2fb" opacity="0.75"/>
<ellipse cx="16.2" cy="9.3" rx="2.7" ry="3.5" fill="url(#gFace2)"/>
<path d="M13.5 8.6 Q13.2 4.4 17 4.5 Q20.7 4.8 20.4 9.2 Q20.2 11.2 18.8 12.4 Q19.4 9.4 18.6 7.8 Q16.4 6.4 14.4 7.4 Q13.8 7.8 13.5 8.6 Z" fill="#555b61"/>
</svg>
<div class="t" style="left:1152.1px;top:344.9px;font-size:14px;letter-spacing:-0.480px;">Read</div>
<div class="t" style="left:1791.0px;top:344.9px;font-size:14px;letter-spacing:-0.624px;">No</div>
<svg class="abs" style="left:590px;top:361.08px" width="30" height="24" viewBox="0 0 30 24">
<path d="M4.4 17.4 L4.4 13.6 Q4.6 10.9 8 10.7 L11.6 10.7 Q13.4 11 13.4 13 L13.4 17.4 Z" fill="url(#gShG)"/>
<rect x="9" y="12.6" width="1.7" height="3.2" fill="#d2e8c4" opacity="0.8"/>
<path d="M5.6 9.6 Q5 2 9.3 1.9 Q13.4 2 12.9 9.8 Q12 10.6 11.6 10.2 L7 10.2 Q6 10.4 5.6 9.6 Z" fill="#bfa552"/>
<ellipse cx="9.6" cy="7.5" rx="2.3" ry="3.3" fill="url(#gFace)"/>
<rect x="8.7" y="10" width="1.9" height="1.6" fill="url(#gFace)"/>
<path d="M11.9 21 L11.9 17 Q12.2 13.2 16 12.9 L19.6 12.9 Q23 13.4 23.1 17.6 L23.1 21 Z" fill="url(#gShB)"/>
<path d="M15.2 11 L18.4 11 L18.2 14.2 L16.8 15.4 L15.5 14 Z" fill="#a3541a"/>
<path d="M15.3 13.6 L16.8 15.6 L18.3 13.8 L17.6 16.6 L16 16.6 Z" fill="#e8f2fb" opacity="0.75"/>
<ellipse cx="16.2" cy="9.3" rx="2.7" ry="3.5" fill="url(#gFace2)"/>
<path d="M13.5 8.6 Q13.2 4.4 17 4.5 Q20.7 4.8 20.4 9.2 Q20.2 11.2 18.8 12.4 Q19.4 9.4 18.6 7.8 Q16.4 6.4 14.4 7.4 Q13.8 7.8 13.5 8.6 Z" fill="#555b61"/>
</svg>
<div class="t" style="left:1152.1px;top:366.1px;font-size:14px;letter-spacing:-0.405px;">Edit settings, delete, modify security</div>
<div class="t" style="left:1791.0px;top:366.1px;font-size:14px;letter-spacing:-0.624px;">No</div>
<svg class="abs" style="left:590px;top:382.35px" width="30" height="24" viewBox="0 0 30 24">
<path d="M4.4 17.4 L4.4 13.6 Q4.6 10.9 8 10.7 L11.6 10.7 Q13.4 11 13.4 13 L13.4 17.4 Z" fill="#35909a"/>
<rect x="9" y="12.6" width="1.7" height="3.2" fill="#6fb4c4" opacity="0.8"/>
<path d="M5.6 9.6 Q5 2 9.3 1.9 Q13.4 2 12.9 9.8 Q12 10.6 11.6 10.2 L7 10.2 Q6 10.4 5.6 9.6 Z" fill="#4f8aa2"/>
<ellipse cx="9.6" cy="7.5" rx="2.3" ry="3.3" fill="#4d82b4"/>
<rect x="8.7" y="10" width="1.9" height="1.6" fill="#4d82b4"/>
<path d="M11.9 21 L11.9 17 Q12.2 13.2 16 12.9 L19.6 12.9 Q23 13.4 23.1 17.6 L23.1 21 Z" fill="#5b9fe6"/>
<path d="M15.2 11 L18.4 11 L18.2 14.2 L16.8 15.4 L15.5 14 Z" fill="#2a5c9c"/>
<path d="M15.3 13.6 L16.8 15.6 L18.3 13.8 L17.6 16.6 L16 16.6 Z" fill="#e8f2fb" opacity="0.75"/>
<ellipse cx="16.2" cy="9.3" rx="2.7" ry="3.5" fill="#3f78b8"/>
<path d="M13.5 8.6 Q13.2 4.4 17 4.5 Q20.7 4.8 20.4 9.2 Q20.2 11.2 18.8 12.4 Q19.4 9.4 18.6 7.8 Q16.4 6.4 14.4 7.4 Q13.8 7.8 13.5 8.6 Z" fill="#2d5f98"/>
</svg>
<div class="t" style="left:1152.1px;top:387.4px;font-size:14px;letter-spacing:-0.463px;color:#fff;">Read (from Security Filtering)</div>
<div class="t" style="left:1791.0px;top:387.4px;font-size:14px;letter-spacing:-0.624px;color:#fff;">No</div>
<svg class="abs" style="left:590px;top:403.62px" width="30" height="24" viewBox="0 0 30 24">
<path d="M4.4 17.4 L4.4 13.6 Q4.6 10.9 8 10.7 L11.6 10.7 Q13.4 11 13.4 13 L13.4 17.4 Z" fill="url(#gShG)"/>
<rect x="9" y="12.6" width="1.7" height="3.2" fill="#d2e8c4" opacity="0.8"/>
<path d="M5.6 9.6 Q5 2 9.3 1.9 Q13.4 2 12.9 9.8 Q12 10.6 11.6 10.2 L7 10.2 Q6 10.4 5.6 9.6 Z" fill="#bfa552"/>
<ellipse cx="9.6" cy="7.5" rx="2.3" ry="3.3" fill="url(#gFace)"/>
<rect x="8.7" y="10" width="1.9" height="1.6" fill="url(#gFace)"/>
<path d="M11.9 21 L11.9 17 Q12.2 13.2 16 12.9 L19.6 12.9 Q23 13.4 23.1 17.6 L23.1 21 Z" fill="url(#gShB)"/>
<path d="M15.2 11 L18.4 11 L18.2 14.2 L16.8 15.4 L15.5 14 Z" fill="#a3541a"/>
<path d="M15.3 13.6 L16.8 15.6 L18.3 13.8 L17.6 16.6 L16 16.6 Z" fill="#e8f2fb" opacity="0.75"/>
<ellipse cx="16.2" cy="9.3" rx="2.7" ry="3.5" fill="url(#gFace2)"/>
<path d="M13.5 8.6 Q13.2 4.4 17 4.5 Q20.7 4.8 20.4 9.2 Q20.2 11.2 18.8 12.4 Q19.4 9.4 18.6 7.8 Q16.4 6.4 14.4 7.4 Q13.8 7.8 13.5 8.6 Z" fill="#555b61"/>
</svg>
<div class="t" style="left:1152.1px;top:408.7px;font-size:14px;letter-spacing:-0.405px;">Edit settings, delete, modify security</div>
<div class="t" style="left:1791.0px;top:408.7px;font-size:14px;letter-spacing:-0.624px;">No</div>
<div class="t" style="left:616.0px;top:281.0px;font-size:14px;letter-spacing:-0.375px;">Authenticated Users</div>
<div class="t" style="left:616.0px;top:302.3px;font-size:14px;letter-spacing:-0.646px;">Domain Admins</div>
<div class="t" style="left:709.2px;top:302.3px;font-size:14px;">(</div>
<div class="t" style="left:767.9px;top:302.3px;font-size:14px;letter-spacing:-0.503px;">\Domain Admins)</div>
<div class="t" style="left:616.0px;top:323.6px;font-size:14px;letter-spacing:-0.598px;">Enterprise Admins</div>
<div class="t" style="left:722.4px;top:323.6px;font-size:14px;">(</div>
<div class="t" style="left:782.1px;top:323.6px;font-size:14px;letter-spacing:-0.516px;">\Enterprise Admins)</div>
<div class="t" style="left:616.0px;top:344.9px;font-size:14px;letter-spacing:-0.404px;">ENTERPRISE DOMAIN CONTROLLERS</div>
<div class="t" style="left:616.0px;top:366.1px;font-size:14px;letter-spacing:-0.603px;">SYSTEM</div>
<div class="t" style="left:616.0px;top:387.4px;font-size:14px;letter-spacing:-0.182px;color:#fff;">TargetMachines (DINESH\TargetMachines)</div>
<div class="t" style="left:616.0px;top:408.7px;font-size:14px;letter-spacing:-0.330px;">Test (</div>
<div class="abs" style="left:711.1px;top:297px;width:58.8px;height:20.9px;background:linear-gradient(100deg,#d2d3d3 0%,#d6d7d7 60%,#dcdddd 100%);"></div>
<div class="abs" style="left:725px;top:324.1px;width:58.9px;height:15.7px;background:linear-gradient(100deg,#c6c6c6 0%,#c9c9c9 60%,#d2d2d2 100%);"></div>
<div class="abs" style="left:648.2px;top:405px;width:66px;height:21.8px;background:linear-gradient(90deg,#d6d6d6 0%,#dadada 60%,#ececec 100%);"></div>
<div class="abs" style="left:587px;top:994.2px;width:136px;height:30px;background:#e1e1e1;border:1.4px solid #b4b4b4;"></div>
<div class="t" style="left:638.4px;top:1000.3px;font-size:14px;letter-spacing:-0.420px;">Add...</div>
<div class="abs" style="left:732.4px;top:994.2px;width:135.39999999999998px;height:30px;background:#e1e1e1;border:1.4px solid #b4b4b4;"></div>
<div class="t" style="left:775.7px;top:1000.3px;font-size:14px;letter-spacing:-0.420px;">Remove</div>
<div class="abs" style="left:877px;top:994.2px;width:136px;height:30px;background:#e1e1e1;border:1.4px solid #b4b4b4;"></div>
<div class="t" style="left:915.6px;top:1000.3px;font-size:14px;letter-spacing:-0.420px;">Properties</div>
<div class="abs" style="left:1757px;top:994.2px;width:136px;height:30px;background:#e1e1e1;border:1.4px solid #b4b4b4;"></div>
<div class="t" style="left:1790.8px;top:1000.3px;font-size:14px;letter-spacing:-0.420px;">Advanced...</div>
<div class="abs" style="left:711px;top:391px;width:350.4px;height:153.8px;background:#f2f2f2;border:1px solid #a3a3a3;box-shadow:1px 1px 2px rgba(0,0,0,0.10);"></div>
<div class="abs" style="left:714.7px;top:541.2px;width:342.6px;height:1px;background:#d3e5f5;"></div>
<div class="abs" style="left:714.7px;top:395px;width:27.6px;height:27.2px;background:#90c8f6;"></div>
<div class="abs" style="left:724.9px;top:405.2px;width:7.2px;height:7.2px;background:#222;border-radius:50%;"></div>
<div class="abs" style="left:714.7px;top:450px;width:342.6px;height:27px;background:#91c9f7;"></div>
<div class="abs" style="left:750px;top:481.4px;width:307.3px;height:1px;background:#d7d7d7;"></div>
<div class="t" style="left:754.9px;top:400.0px;font-size:15px;letter-spacing:-0.978px;">Read</div>
<div class="t" style="left:754.9px;top:427.6px;font-size:15px;letter-spacing:-0.182px;">Edit settings</div>
<div class="t" style="left:754.9px;top:455.3px;font-size:15px;letter-spacing:-0.072px;">Edit settings, delete, modify security</div>
<div class="t" style="left:754.9px;top:491.4px;font-size:15px;letter-spacing:-0.368px;">Remove</div>
<div class="t" style="left:754.9px;top:519.0px;font-size:15px;letter-spacing:-0.232px;">Properties</div>
<div class="abs" style="left:1878px;top:38px;width:1px;height:969px;background:#fff;"></div>
<div class="abs" style="left:1879px;top:38px;width:11px;height:969px;background:#f0f0f0;"></div>
<div class="abs" style="left:1879px;top:59.3px;width:11px;height:832.6px;background:#cdcdcd;"></div>
<svg class="abs" style="left:1881px;top:45px" width="9" height="8" viewBox="0 0 9 8"><path d="M2.2 6 L7.6 0.9 L12 5" fill="none" stroke="#555" stroke-width="1.6"/></svg>
<svg class="abs" style="left:1881px;top:993px" width="9" height="8" viewBox="0 0 9 8"><path d="M2.2 1.4 L7.6 6.6 L12 2.4" fill="none" stroke="#555" stroke-width="1.6"/></svg>
</body>
</html>
